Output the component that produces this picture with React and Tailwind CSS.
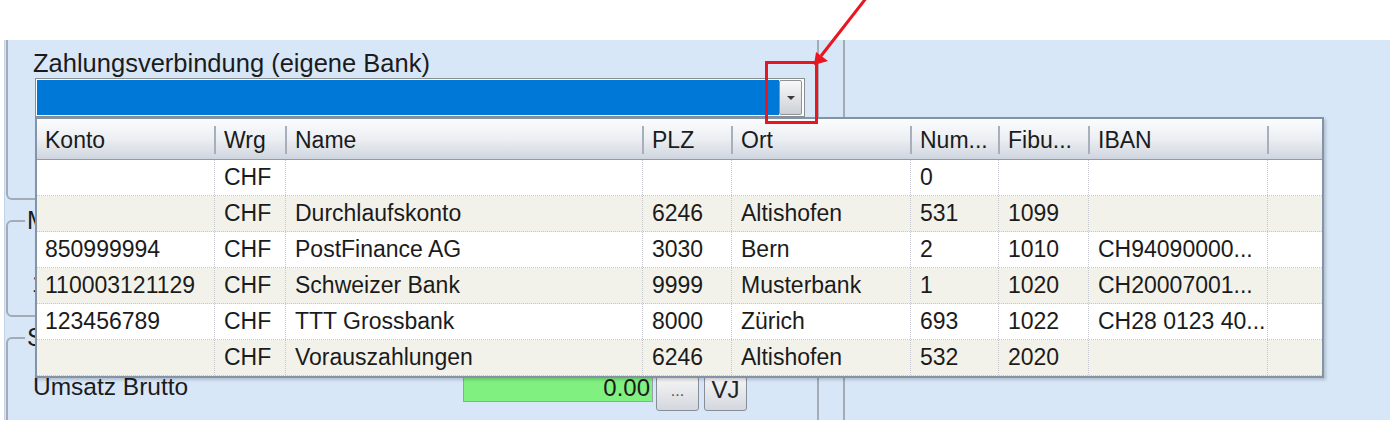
import React from 'react';

const columns = [
  { label: 'Konto', w: 'w-[177px]' },
  { label: 'Wrg', w: 'w-[71px]' },
  { label: 'Name', w: 'w-[357px]' },
  { label: 'PLZ', w: 'w-[89px]' },
  { label: 'Ort', w: 'w-[179px]' },
  { label: 'Num...', w: 'w-[88px]' },
  { label: 'Fibu...', w: 'w-[90px]' },
  { label: 'IBAN', w: 'w-[179px]' },
  { label: '', w: 'w-[55px]' },
];

const rows = [
  ['', 'CHF', '', '', '', '0', '', '', ''],
  ['', 'CHF', 'Durchlaufskonto', '6246', 'Altishofen', '531', '1099', '', ''],
  ['850999994', 'CHF', 'PostFinance AG', '3030', 'Bern', '2', '1010', 'CH94090000...', ''],
  ['110003121129', 'CHF', 'Schweizer Bank', '9999', 'Musterbank', '1', '1020', 'CH20007001...', ''],
  ['123456789', 'CHF', 'TTT Grossbank', '8000', 'Zürich', '693', '1022', 'CH28 0123 40...', ''],
  ['', 'CHF', 'Vorauszahlungen', '6246', 'Altishofen', '532', '2020', '', ''],
];

function Legend({ children }) {
  return (
    <div className="-mt-[16px] ml-[17px] w-fit bg-[#d8e7f8] px-[2px] text-[25px] leading-[29px]">
      {children}
    </div>
  );
}

function BankList() {
  return (
    <div className="absolute left-[35px] top-[117px] z-10 w-[1289px] border-2 border-[#8494a8] bg-white shadow-[2px_2px_3px_rgba(0,0,0,0.18)]">
      <div className="flex h-[41px] border-b border-[#8f9cae] bg-gradient-to-b from-[#fbfcfd] via-[#eceff3] to-[#cfd5df] pt-[2px]">
        {columns.map((col, i) => (
          <div key={i} className={`${col.w} flex shrink-0 items-center overflow-hidden whitespace-nowrap`}>
            {i > 0 && <span className="h-[28px] w-[2px] shrink-0 bg-[#a7afbb]" />}
            <span className="ml-[8px]">{col.label}</span>
          </div>
        ))}
      </div>
      {rows.map((row, r) => (
        <div
          key={r}
          className={`flex h-[36px] border-b border-dotted border-[#c3c7cd] ${r % 2 === 1 ? 'bg-[#f3f2ea]' : 'bg-white'}`}
        >
          {row.map((cell, i) => (
            <div
              key={i}
              className={`${columns[i].w} flex shrink-0 items-center overflow-hidden whitespace-nowrap ${
                i > 0 ? 'border-l border-dotted border-[#c3c7cd] pl-[9px]' : 'pl-[8px]'
              }`}
            >
              {cell}
            </div>
          ))}
        </div>
      ))}
    </div>
  );
}

function GrayButton({ children, className = '' }) {
  return (
    <div
      className={`flex h-[35px] w-[43px] justify-center rounded-[3px] border border-[#868e98] bg-gradient-to-b from-[#f6f6f7] to-[#d3d7dd] ${className}`}
    >
      {children}
    </div>
  );
}

export default function App() {
  return (
    <div className="relative h-[424px] w-[1398px] overflow-hidden bg-white font-['Liberation_Sans',Arial,sans-serif] text-[23px] text-[#1b1b1b]">
      <div className="h-[40px]" />
      <div className="ml-[4px] flex h-[380px] w-[1386px] border-l border-[#c2d3e6] bg-[#d8e7f8]">
        <div className="ml-[1px] flex w-[813px] flex-col">
          {/* Zahlungsverbindung */}
          <div className="h-[160px] rounded-b-[6px] border-x-2 border-b-2 border-[#a2abb6]">
            <div className="ml-[25px] mt-[9px] text-[25.5px] leading-[29px]">Zahlungsverbindung (eigene Bank)</div>
            <div className="ml-[27px] flex h-[39px] w-[770px] border border-[#8a8d91] bg-white p-[1px]">
              <div className="flex-1 bg-[#0078d7]" />
              <div className="flex w-[23px] items-center justify-center rounded-[2px] border border-[#8f9297] bg-gradient-to-b from-[#f8f8f8] to-[#cdd1d7]">
                <svg width="8" height="4" viewBox="0 0 8 4">
                  <path d="M0 0h8L4 4z" fill="#3a3a3a" />
                </svg>
              </div>
              <div className="w-[1px]" />
            </div>
          </div>

          {/* M... */}
          <div className="mt-[20px] h-[97px] rounded-[6px] border-2 border-[#a2abb6]">
            <Legend>Mandant</Legend>
            <div className="ml-[24px] mt-[36px] leading-[27px]">1</div>
          </div>

          {/* S... */}
          <div className="mt-[20px] flex-1 rounded-t-[6px] border-x-2 border-t-2 border-[#a2abb6]">
            <Legend>Saldo</Legend>
            <div className="mt-[20px] flex items-start">
              <div className="ml-[25px] w-[430px] text-[24.5px] leading-[29px]">Umsatz Brutto</div>
              <div className="mt-[2px] h-[28px] w-[190px] border border-[#9aa0a6] bg-[#80f181] pr-[2px] text-right text-[24px] leading-[26px]">
                0.00
              </div>
              <GrayButton className="ml-[3px] mt-[4px] items-center pb-[6px] text-[16px] text-[#555]">...</GrayButton>
              <GrayButton className="ml-[5px] mt-[4px] items-start text-[24px] leading-[26px] text-[#222]">VJ</GrayButton>
            </div>
          </div>
        </div>
        <div className="w-[24px]" />
        <div className="flex-1 border-l-2 border-[#a2abb6]" />
      </div>

      <BankList />

      {/* annotation */}
      <div className="absolute left-[765px] top-[61px] z-20 h-[63px] w-[53px] border-[3px] border-[#e8161e]" />
      <svg className="pointer-events-none absolute left-0 top-0 z-20" width="1398" height="424">
        <line x1="867" y1="-3" x2="821" y2="56" stroke="#e8161e" strokeWidth="3" />
        <polygon points="814,65 816,52 828,61" fill="#e8161e" />
      </svg>
    </div>
  );
}
